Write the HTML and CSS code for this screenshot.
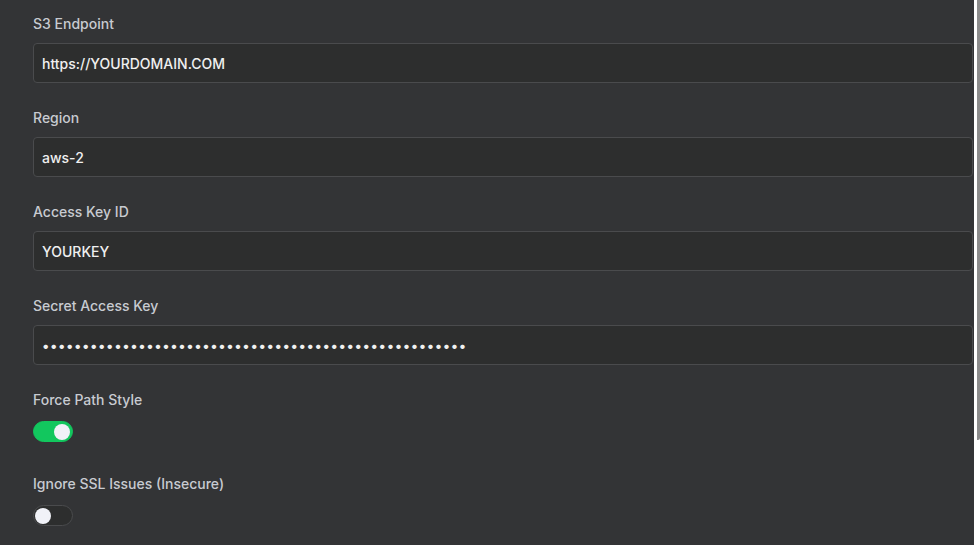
FILE: index.html
```html
<!DOCTYPE html>
<html lang="en">
<head>
<meta charset="utf-8">
<title>S3 Settings</title>
<link rel="stylesheet" href="styles.css">
</head>
<body>
<main class="form">
  <div class="field">
    <label class="label">S3 Endpoint</label>
    <input class="input" type="text" value="https://YOURDOMAIN.COM">
  </div>
  <div class="field">
    <label class="label">Region</label>
    <input class="input" type="text" value="aws-2">
  </div>
  <div class="field">
    <label class="label">Access Key ID</label>
    <input class="input" type="text" value="YOURKEY">
  </div>
  <div class="field">
    <label class="label">Secret Access Key</label>
    <input class="input secret" type="password" value="abcdefghijklmnopqrstuvwxyzabcdefghijklmnopqrstuvwxyz1">
  </div>
  <div class="field toggle-field">
    <label class="label">Force Path Style</label>
    <span class="switch on"><span class="knob"></span></span>
  </div>
  <div class="field toggle-field">
    <label class="label">Ignore SSL Issues (Insecure)</label>
    <span class="switch"><span class="knob"></span></span>
  </div>
</main>
<div class="scrollbar"><div class="thumb"></div></div>
</body>
</html>
```
FILE: styles.css
```css
html {
  background: #333436;
}
body {
  margin: 0;
  font-family: Inter, "Noto Sans", sans-serif;
  color: #e6e6e6;
  overflow: hidden;
}
.form {
  padding: 14px 7px 0 33px;
  display: flex;
  flex-direction: column;
  gap: 25px;
}
.field {
  display: flex;
  flex-direction: column;
  gap: 9px;
}
.label {
  font-size: 14px;
  line-height: 20px;
  font-weight: 500;
  color: #c8cbd1;
}
.input {
  box-sizing: border-box;
  height: 40px;
  width: 100%;
  margin: 0;
  padding: 0 8px;
  background: #2d2e2e;
  border: 1px solid #4a4b4d;
  border-radius: 4px;
  color: #f0f0f0;
  font-family: Inter, "Noto Sans", sans-serif;
  font-size: 14px;
  font-weight: 500;
  outline: none;
}
.input.secret {
  letter-spacing: 0.55px;
}
.toggle-field {
  gap: 11px;
}
.toggle-field + .toggle-field {
  margin-top: 7px;
}
.switch {
  box-sizing: border-box;
  width: 40px;
  height: 21px;
  border-radius: 11px;
  background: #2d2e2e;
  border: 1px solid #4a4b4d;
  display: flex;
  align-items: center;
  padding: 0 1px;
}
.switch.on {
  background: #12c75e;
  border-color: #12c75e;
  justify-content: flex-end;
  padding: 0 2px;
}
.knob {
  width: 16px;
  height: 16px;
  border-radius: 50%;
  background: #f1f2f8;
}
.scrollbar {
  position: fixed;
  top: 0;
  right: 0;
  bottom: 0;
  width: 6px;
  background: #ffffff;
}
.thumb {
  margin-left: 3px;
  width: 3px;
  height: 440px;
  background: #8c8c8c;
  border-bottom-right-radius: 2px;
}
```
